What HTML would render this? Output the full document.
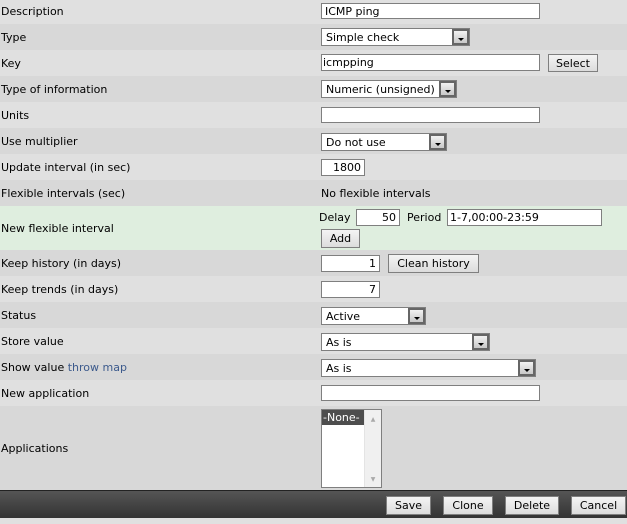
<!DOCTYPE html>
<html><head><style>
body{margin:0;width:627px;height:524px;background:#e0e0e0;font-family:"DejaVu Sans",Verdana,sans-serif;font-size:11px;color:#000;position:relative;overflow:hidden}
.r{position:absolute;left:0;width:627px}
.l{position:absolute;left:1px}
.a{position:absolute}
.in{position:absolute;background:#fff;border:1px solid #7f7f7f;box-sizing:border-box;padding:0 3px;line-height:15px;font-size:11px}
.sel{position:absolute;background:#fff;border:1px solid #7f7f7f;box-sizing:border-box;padding-left:4px;line-height:17px;font-size:11px}
.sel i{position:absolute;right:0;top:0;bottom:0;width:17px;background:linear-gradient(#f2f2f2,#c8c8c8);border:2px solid #666;box-sizing:border-box}
.sel i:after{content:"";position:absolute;left:4px;top:7px;border-left:3px solid transparent;border-right:3px solid transparent;border-top:3px solid #000}
.b{position:absolute;border:1px solid #7f7f7f;box-sizing:border-box;background:linear-gradient(#f4f4f4,#dcdcdc);text-align:center;line-height:17px;font-size:11px}
</style></head><body>
<div class="r" style="top:0;height:24px;background:#e0e0e0"></div>
<div class="r" style="top:24px;height:26px;background:#d8d8d8"></div>
<div class="r" style="top:50px;height:26px;background:#e0e0e0"></div>
<div class="r" style="top:76px;height:26px;background:#d8d8d8"></div>
<div class="r" style="top:102px;height:26px;background:#e0e0e0"></div>
<div class="r" style="top:128px;height:26px;background:#d8d8d8"></div>
<div class="r" style="top:154px;height:26px;background:#e0e0e0"></div>
<div class="r" style="top:180px;height:26px;background:#d8d8d8"></div>
<div class="r" style="top:206px;height:44px;background:#dfeedf"></div>
<div class="r" style="top:250px;height:26px;background:#d8d8d8"></div>
<div class="r" style="top:276px;height:26px;background:#e0e0e0"></div>
<div class="r" style="top:302px;height:26px;background:#d8d8d8"></div>
<div class="r" style="top:328px;height:26px;background:#e0e0e0"></div>
<div class="r" style="top:354px;height:26px;background:#d8d8d8"></div>
<div class="r" style="top:380px;height:26px;background:#e0e0e0"></div>
<div class="r" style="top:406px;height:84px;background:#d8d8d8"></div>
<div class="r" style="top:490px;height:28px;background:linear-gradient(#555,#333);border-top:1px solid #222;box-sizing:border-box"></div>

<div class="l" style="top:5px">Description</div>
<div class="l" style="top:31px">Type</div>
<div class="l" style="top:57px">Key</div>
<div class="l" style="top:83px">Type of information</div>
<div class="l" style="top:109px">Units</div>
<div class="l" style="top:135px">Use multiplier</div>
<div class="l" style="top:161px">Update interval (in sec)</div>
<div class="l" style="top:187px">Flexible intervals (sec)</div>
<div class="l" style="top:222px">New flexible interval</div>
<div class="l" style="top:257px">Keep history (in days)</div>
<div class="l" style="top:283px">Keep trends (in days)</div>
<div class="l" style="top:309px">Status</div>
<div class="l" style="top:335px">Store value</div>
<div class="l" style="top:361px">Show value <span style="color:#3c5a8c">throw map</span></div>
<div class="l" style="top:387px">New application</div>
<div class="l" style="top:442px">Applications</div>

<div class="in" style="left:321px;top:3px;width:219px;height:16px">ICMP ping</div>
<div class="sel" style="left:321px;top:28px;width:149px;height:18px">Simple check<i></i></div>
<div class="in" style="left:321px;top:54px;width:219px;height:17px;padding-left:1px">icmpping</div>
<div class="b" style="left:548px;top:54px;width:50px;height:18px">Select</div>
<div class="sel" style="left:321px;top:80px;width:136px;height:18px">Numeric (unsigned)<i></i></div>
<div class="in" style="left:321px;top:107px;width:219px;height:16px"></div>
<div class="sel" style="left:321px;top:133px;width:126px;height:18px">Do not use<i></i></div>
<div class="in" style="left:321px;top:159px;width:44px;height:17px;text-align:right">1800</div>
<div class="a" style="left:321px;top:187px">No flexible intervals</div>
<div class="a" style="left:319px;top:211px">Delay</div>
<div class="in" style="left:356px;top:209px;width:44px;height:17px;text-align:right">50</div>
<div class="a" style="left:407px;top:211px">Period</div>
<div class="in" style="left:447px;top:209px;width:155px;height:17px;padding-left:2px">1-7,00:00-23:59</div>
<div class="b" style="left:321px;top:229px;width:39px;height:19px">Add</div>
<div class="in" style="left:321px;top:255px;width:59px;height:17px;text-align:right">1</div>
<div class="b" style="left:388px;top:254px;width:91px;height:19px">Clean history</div>
<div class="in" style="left:321px;top:281px;width:59px;height:17px;text-align:right">7</div>
<div class="sel" style="left:321px;top:307px;width:105px;height:18px">Active<i></i></div>
<div class="sel" style="left:321px;top:333px;width:169px;height:18px">As is<i></i></div>
<div class="sel" style="left:321px;top:359px;width:215px;height:18px">As is<i></i></div>
<div class="in" style="left:321px;top:385px;width:219px;height:16px"></div>
<div class="a" style="left:321px;top:409px;width:61px;height:79px;background:#fff;border:1px solid #7f7f7f;box-sizing:border-box">
 <div style="position:absolute;left:0;top:0;width:43px;height:15px;background:#4d4d4d;color:#fff;line-height:15px;padding-left:1px">-None-</div>
 <div style="position:absolute;right:0;top:0;width:16px;height:77px;background:#f0f0f0;border-left:1px solid #e4e4e4;color:#aaa;font-size:6px;text-align:center">
  <div style="position:absolute;top:6px;width:16px">▲</div><div style="position:absolute;bottom:4px;width:16px">▼</div></div>
</div>
<div class="b" style="left:386px;top:496px;width:45px;height:19px">Save</div>
<div class="b" style="left:443px;top:496px;width:50px;height:19px">Clone</div>
<div class="b" style="left:505px;top:496px;width:54px;height:19px">Delete</div>
<div class="b" style="left:571px;top:496px;width:55px;height:19px">Cancel</div>
</body></html>
